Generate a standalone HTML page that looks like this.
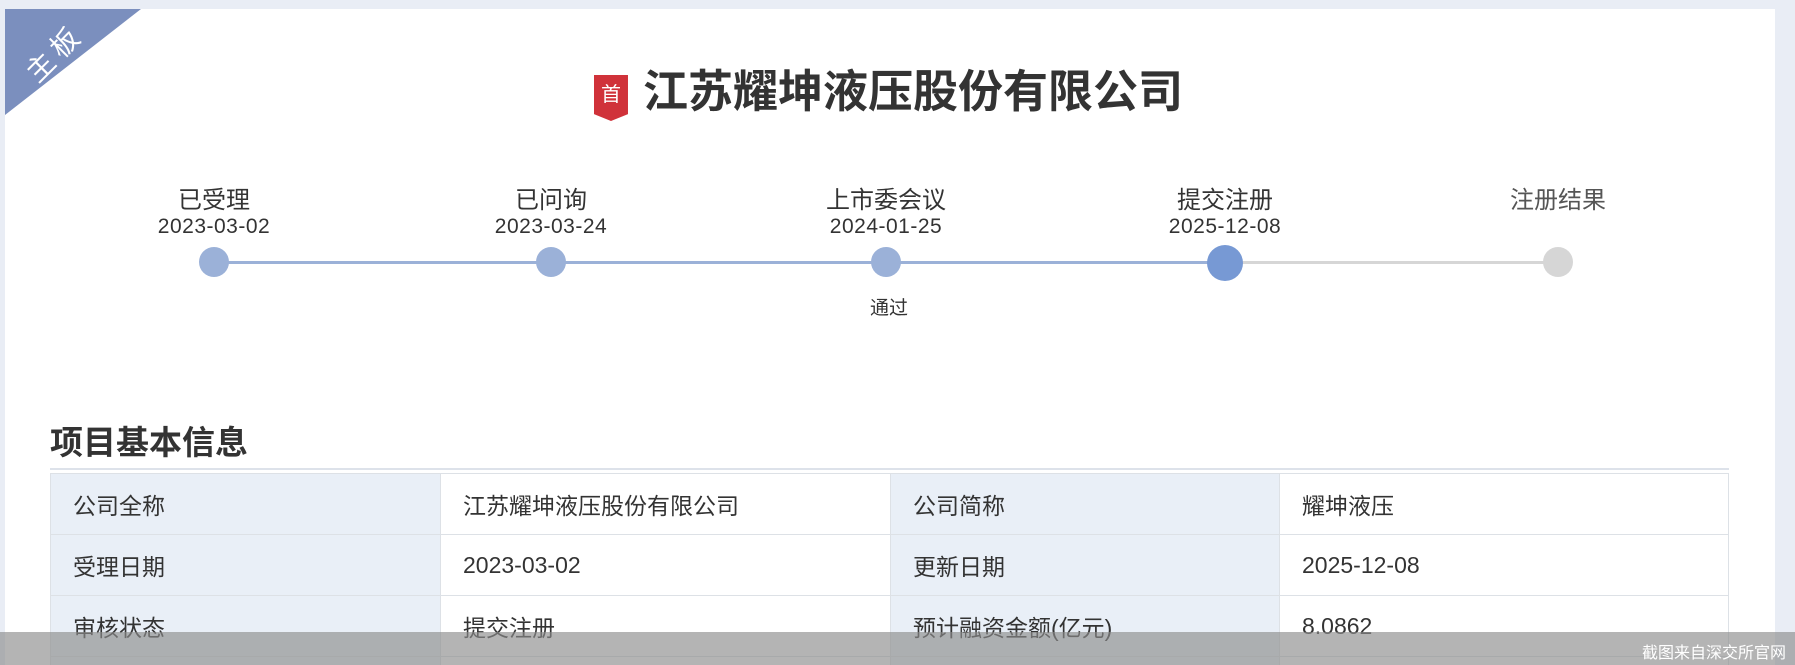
<!DOCTYPE html>
<html><head><meta charset="utf-8"><style>
*{margin:0;padding:0;box-sizing:border-box}
html,body{width:1795px;height:665px;overflow:hidden}
body{background:#e9edf5;position:relative;font-family:"Liberation Sans","Noto Sans CJK SC",sans-serif;color:#333}
.card{position:absolute;left:5px;top:9px;width:1770px;height:656px;background:#fff}
.rib{position:absolute;left:5px;top:9px;width:0;height:0;border-top:106px solid #7b8fbe;border-right:136px solid transparent}
.ribt{position:absolute;left:20px;top:32px;color:#fff;font-size:28px;transform:rotate(-45deg);letter-spacing:6px}
.title{position:absolute;left:0;width:1795px;top:55px;text-align:center;font-size:45px;font-weight:bold;color:#333;padding-right:18px}
.badge{display:inline-block;width:34px;height:46px;background:#d0323a;color:#fff;font-size:20px;font-weight:normal;vertical-align:8px;margin-right:15px;line-height:40px;clip-path:polygon(0 0,100% 0,100% 85%,50% 100%,0 85%);position:relative;top:2px}
.st{position:absolute;width:300px;text-align:center}
.lb{font-size:24px;top:180px;color:#333}
.dt{font-size:21px;top:215px;color:#333;letter-spacing:0.5px}
.dot{position:absolute;border-radius:50%}
.line{position:absolute;height:3px;top:261px}
h2{position:absolute;left:50px;top:416px;font-size:33px;font-weight:bold;color:#333}
.hr{position:absolute;left:50px;top:468px;width:1679px;height:2px;background:#dde2ea}
.tw{position:absolute;left:50px;top:473px;width:1679px;height:192px;overflow:hidden}
table{border-collapse:collapse;width:1679px}
td{border:1px solid #dde1e6;height:61px;font-size:23px;padding-left:22px;color:#333}
td.k{background:#e9eff7}
.ov{position:absolute;left:0;top:632px;width:1795px;height:33px;background:rgba(140,140,140,.65)}
.ovt{position:absolute;right:9px;top:639px;color:#fff;font-size:16px}
</style></head><body>
<div class="card"></div>
<div class="rib"></div><div class="ribt">主板</div>
<div class="title"><span class="badge">首</span>江苏耀坤液压股份有限公司</div>
<div class="line" style="left:214px;width:1011px;background:#9bb1d8"></div>
<div class="line" style="left:1225px;width:333px;background:#d6d6d6"></div>
<div class="dot" style="left:199px;top:247px;width:30px;height:30px;background:#9bb1d8"></div>
<div class="dot" style="left:536px;top:247px;width:30px;height:30px;background:#9bb1d8"></div>
<div class="dot" style="left:871px;top:247px;width:30px;height:30px;background:#9bb1d8"></div>
<div class="dot" style="left:1207px;top:245px;width:36px;height:36px;background:#7799d4"></div>
<div class="dot" style="left:1543px;top:247px;width:30px;height:30px;background:#d6d6d6"></div>
<div class="st lb" style="left:64px">已受理</div><div class="st dt" style="left:64px">2023-03-02</div>
<div class="st lb" style="left:401px">已问询</div><div class="st dt" style="left:401px">2023-03-24</div>
<div class="st lb" style="left:736px">上市委会议</div><div class="st dt" style="left:736px">2024-01-25</div>
<div class="st lb" style="left:1075px">提交注册</div><div class="st dt" style="left:1075px">2025-12-08</div>
<div class="st lb" style="left:1408px;color:#555">注册结果</div>
<div class="st" style="left:739px;top:293px;font-size:19px">通过</div>
<h2>项目基本信息</h2><div class="hr"></div>
<div class="tw"><table>
<tr><td class="k" style="width:390px">公司全称</td><td style="width:450px">江苏耀坤液压股份有限公司</td><td class="k" style="width:389px">公司简称</td><td>耀坤液压</td></tr>
<tr><td class="k">受理日期</td><td>2023-03-02</td><td class="k">更新日期</td><td>2025-12-08</td></tr>
<tr><td class="k">审核状态</td><td>提交注册</td><td class="k">预计融资金额(亿元)</td><td>8.0862</td></tr>
<tr><td class="k"></td><td></td><td class="k"></td><td></td></tr>
</table></div>
<div class="ov"></div><div class="ovt">截图来自深交所官网</div>
</body></html>
